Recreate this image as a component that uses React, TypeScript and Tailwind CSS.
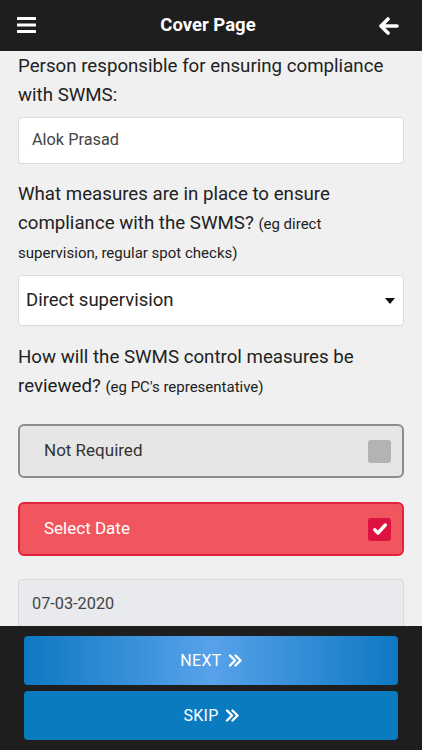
import React from "react";

const Check = () => (
  <svg viewBox="0 0 24 24" className="w-[16px] h-[16px]" fill="none" stroke="white" strokeWidth={5} strokeLinecap="round" strokeLinejoin="round">
    <path d="M4 13l5 5L20 6" />
  </svg>
);

const Chevrons = () => (
  <svg width="14" height="13" viewBox="0 0 14 13" className="ml-[6px]" fill="none" stroke="white" strokeWidth="2.4" strokeLinecap="round" strokeLinejoin="round">
    <path d="M2 1.5l5 5-5 5M7.5 1.5l5 5-5 5" />
  </svg>
);

const App = () => {
  return (
    <div className="h-[750px] w-[422px] flex flex-col bg-[#f0f0f0] font-['Roboto',sans-serif] overflow-hidden">
      {/* Header */}
      <header className="h-[51px] shrink-0 bg-[#1e1e1e] flex items-center justify-between px-[17px]">
        <svg width="20" height="17" viewBox="0 0 20 17">
          <rect x="0" y="0" width="19" height="3" rx="0.5" fill="white" />
          <rect x="0" y="6.5" width="19" height="3" rx="0.5" fill="white" />
          <rect x="0" y="13" width="19" height="3" rx="0.5" fill="white" />
        </svg>
        <h1 className="text-white text-[18.5px] font-bold">Cover Page</h1>
        <svg width="20" height="18" viewBox="0 0 20 18" className="mr-[6px]">
          <path d="M9 2L2 9l7 7M2.5 9H18" stroke="white" strokeWidth="3.6" fill="none" strokeLinecap="round" strokeLinejoin="round" />
        </svg>
      </header>

      {/* Content */}
      <main className="flex-1 overflow-hidden px-[18px] pt-[1px]">
        <p className="text-[18.7px] leading-[29px] text-[#222]">
          Person responsible for ensuring compliance with SWMS:
        </p>
        <div className="mt-[7px] h-[47px] bg-white border border-[#dcdcdc] rounded-[4px] flex items-center px-[13px] text-[16.3px] text-[#444]">
          Alok Prasad
        </div>

        <p className="mt-[16px] text-[18.7px] leading-[29px] text-[#222] pr-[6px]">
          What measures are in place to ensure compliance with the SWMS?{" "}
          <span className="text-[15px] leading-none">(eg direct supervision, regular spot checks)</span>
        </p>
        <div className="mt-[8px] h-[51px] bg-white border border-[#dcdcdc] rounded-[4px] flex items-center justify-between pl-[7px] pr-[8px] text-[18.5px] text-[#222]">
          <span>Direct supervision</span>
          <svg width="10" height="6" viewBox="0 0 10 6">
            <path d="M0 0h10L5 6z" fill="#111" />
          </svg>
        </div>

        <p className="mt-[17px] text-[18.7px] leading-[29px] text-[#222]">
          How will the SWMS control measures be reviewed?{" "}
          <span className="text-[15px] leading-none">(eg PC's representative)</span>
        </p>

        <div className="mt-[23px] h-[54px] bg-[#e6e6e6] border-2 border-[#8c8c8c] rounded-[6px] flex items-center justify-between pl-[24px] pr-[11px]">
          <span className="text-[17px] text-[#333]">Not Required</span>
          <span className="w-[23px] h-[23px] rounded-[3px] bg-[#b3b3b3]" />
        </div>

        <div className="mt-[24px] h-[54px] bg-[#f1565e] border-2 border-[#e2213e] rounded-[6px] flex items-center justify-between pl-[24px] pr-[11px]">
          <span className="text-[17px] text-white">Select Date</span>
          <span className="w-[23px] h-[23px] rounded-[3px] bg-[#dc1240] flex items-center justify-center">
            <Check />
          </span>
        </div>

        <div className="mt-[23px] h-[50px] bg-[#e8eaed] border border-[#d8d8d8] rounded-[4px] flex items-center px-[13px] text-[16.3px] text-[#444]">
          07-03-2020
        </div>
      </main>

      {/* Footer */}
      <footer className="h-[124px] shrink-0 bg-[#1e1e1e] px-[24px] pt-[10px] flex flex-col gap-[6px]">
        <button className="h-[49px] rounded-[4px] bg-[linear-gradient(to_right,#0d78c2,#58a2ea_50%,#0d78c2)] text-white text-[16px] flex items-center justify-center tracking-[0.3px]">
          NEXT <Chevrons />
        </button>
        <button className="h-[49px] rounded-[4px] bg-[#0a7bbf] text-white text-[16px] flex items-center justify-center tracking-[0.3px]">
          SKIP <Chevrons />
        </button>
      </footer>
    </div>
  );
};

export default App;
